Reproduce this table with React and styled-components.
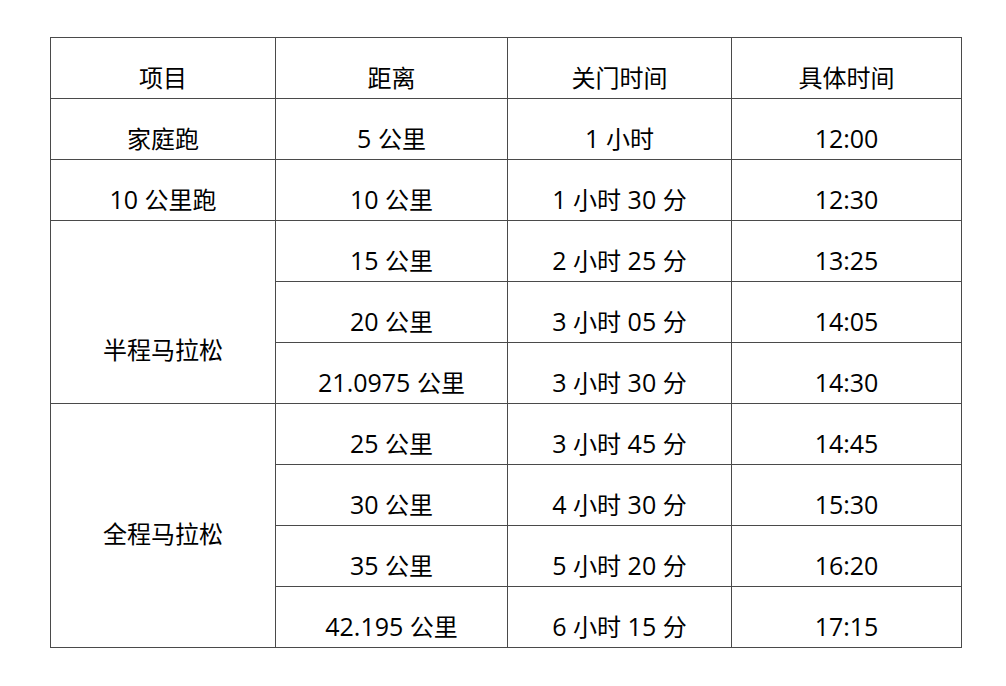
import React from "react";
import styled, { createGlobalStyle } from "styled-components";

const Global = createGlobalStyle`
  html, body { margin: 0; padding: 0; background: #fff; }
  body { font-family: "Noto Sans CJK SC", "Noto Sans", sans-serif; }
`;

const Page = styled.div`
  padding: 37px 0 0 50px;
`;

const Table = styled.table`
  border-collapse: collapse;
  table-layout: fixed;
  width: 911px;
  color: #000;
  font-size: 24px;
  border-left: 1px solid #000;
`;

const Col = styled.col`
  width: ${(p) => p.$w}px;
`;

const Cell = styled.td`
  border: 1px solid #4a4a4a;
  height: 61px;
  padding: ${(p) => p.$pt || 17}px 0 0 0;
  box-sizing: border-box;
  text-align: center;
  vertical-align: ${(p) => (p.$top ? "top" : "middle")};
  line-height: 30px;
  white-space: nowrap;
`;

const Num = styled.span`
  font-family: "Open Sans", "Noto Sans", sans-serif;
  font-size: 25px;
`;

const Han = styled.span`
  font-family: "Noto Sans CJK SC", sans-serif;
  font-size: 24px;
`;

function Text({ children }) {
  const parts = children.match(/[\x00-\x7F]+|[^\x00-\x7F]+/g) || [];
  return parts.map((p, i) =>
    /[\x00-\x7F]/.test(p) ? <Num key={i}>{p}</Num> : <Han key={i}>{p}</Han>
  );
}

const rows = [
  [{ t: "项目" }, { t: "距离" }, { t: "关门时间" }, { t: "具体时间" }],
  [{ t: "家庭跑" }, { t: "5 公里" }, { t: "1 小时" }, { t: "12:00" }],
  [{ t: "10 公里跑" }, { t: "10 公里" }, { t: "1 小时 30 分" }, { t: "12:30" }],
  [{ t: "半程马拉松", rs: 3, top: true, pt: 113 }, { t: "15 公里" }, { t: "2 小时 25 分" }, { t: "13:25" }],
  [{ t: "20 公里" }, { t: "3 小时 05 分" }, { t: "14:05" }],
  [{ t: "21.0975 公里" }, { t: "3 小时 30 分" }, { t: "14:30" }],
  [{ t: "全程马拉松", rs: 4, top: true, pt: 114 }, { t: "25 公里" }, { t: "3 小时 45 分" }, { t: "14:45" }],
  [{ t: "30 公里" }, { t: "4 小时 30 分" }, { t: "15:30" }],
  [{ t: "35 公里" }, { t: "5 小时 20 分" }, { t: "16:20" }],
  [{ t: "42.195 公里" }, { t: "6 小时 15 分" }, { t: "17:15" }],
];

export default function App() {
  return (
    <Page>
      <Global />
      <Table>
        <colgroup>
          <Col $w={225} />
          <Col $w={232} />
          <Col $w={224} />
          <Col $w={230} />
        </colgroup>
        <tbody>
          {rows.map((r, i) => (
            <tr key={i}>
              {r.map((c, j) => (
                <Cell key={j} rowSpan={c.rs} $top={c.top} $pt={c.pt}>
                  <Text>{c.t}</Text>
                </Cell>
              ))}
            </tr>
          ))}
        </tbody>
      </Table>
    </Page>
  );
}
